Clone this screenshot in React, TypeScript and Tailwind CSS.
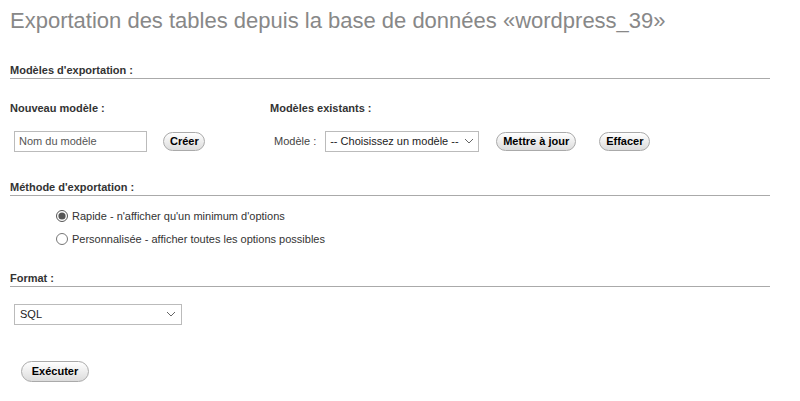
export default function App() {
  const btn =
    'h-[19px] px-[6px] rounded-full border border-[#aaa] bg-gradient-to-b from-white to-[#dcdcdc] text-[11px] font-bold text-black leading-none'
  const heading = 'text-[11px] leading-[13px] font-bold text-[#333] border-b border-[#aaa] pb-[1px] mr-[30px]'
  const Chevron = () => (
    <svg width="10" height="6" viewBox="0 0 10 6" className="text-[#666]">
      <path d="M1 1l4 4 4-4" fill="none" stroke="currentColor" strokeWidth="1" />
    </svg>
  )
  return (
    <div className="w-[800px] h-[401px] bg-white overflow-hidden pl-[10px] pt-[8px]" style={{ fontFamily: '"Liberation Sans", Arial, sans-serif' }}>
      <h1 className="text-[22px] text-[#888] leading-[26px]">Exportation des tables depuis la base de données «wordpress_39»</h1>

      <div className={heading + ' mt-[30px]'}>Modèles d'exportation :</div>
      <div className="flex mt-[21px] text-[11px] font-bold text-[#333]">
        <div className="w-[260px]">Nouveau modèle :</div>
        <div>Modèles existants :</div>
      </div>
      <div className="flex items-center mt-[14px] text-[11px]">
        <input placeholder="Nom du modèle" className="ml-[4px] w-[133px] h-[21px] border border-[#bbb] px-[4px] text-[11px] placeholder:text-[#555]" />
        <button className={btn + ' ml-[16px] w-[42px]'}>Créer</button>
        <span className="ml-[69px] text-[#444]">Modèle :</span>
        <div className="ml-[9px] w-[154px] h-[21px] border border-[#bbb] flex items-center justify-between px-[4px] text-[#222]">
          <span>-- Choisissez un modèle --</span>
          <Chevron />
        </div>
        <button className={btn + ' ml-[17px] w-[80px]'}>Mettre à jour</button>
        <button className={btn + ' ml-[23px] w-[51px]'}>Effacer</button>
      </div>

      <div className={heading + ' mt-[29px]'}>Méthode d'exportation :</div>
      <div className="ml-[46px] mt-[12px] text-[11px] text-[#333] flex flex-col gap-[7px]">
        <label className="flex items-center gap-[4px]">
          <input type="radio" name="m" defaultChecked className="w-[12px] h-[12px] m-0 accent-[#555]" /> Rapide - n'afficher qu'un minimum d'options
        </label>
        <label className="flex items-center gap-[4px]">
          <input type="radio" name="m" className="w-[12px] h-[12px] m-0 accent-[#555]" /> Personnalisée - afficher toutes les options possibles
        </label>
      </div>

      <div className={heading + ' mt-[24px]'}>Format :</div>
      <div className="ml-[4px] mt-[17px] w-[168px] h-[21px] border border-[#bbb] flex items-center justify-between px-[5px] text-[11px] text-[#222]">
        <span>SQL</span>
        <Chevron />
      </div>
      <button className={btn + ' ml-[11px] mt-[36px] w-[68px] h-[21px]'}>Exécuter</button>
    </div>
  )
}
